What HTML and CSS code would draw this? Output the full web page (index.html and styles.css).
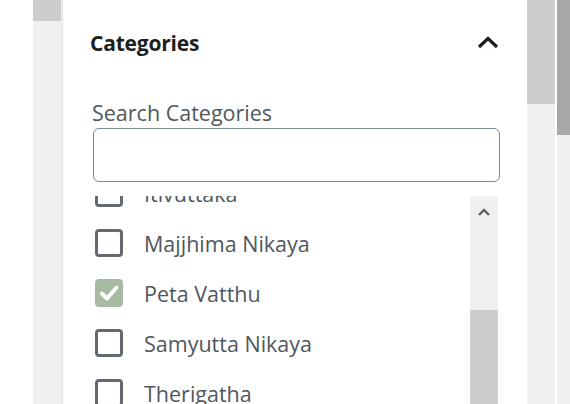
FILE: index.html
```html
<!DOCTYPE html>
<html lang="en">
<head>
<meta charset="utf-8">
<title>Categories</title>
<link rel="stylesheet" href="styles.css">
</head>
<body>
<div class="page">
  <div class="gutter"></div>
  <div class="side-scroll"><div class="side-thumb"></div></div>
  <section class="panel">
    <header class="panel-head">
      <h2 class="panel-title">Categories</h2>
      <svg class="chevron" width="22" height="14" viewBox="0 0 22 14" aria-hidden="true">
        <path d="M2 12 L11 3.5 L20 12" fill="none" stroke="#1e1e1e" stroke-width="3.2"/>
      </svg>
    </header>
    <label class="search-label" for="cat-search">Search Categories</label>
    <input class="search-input" id="cat-search" type="text">
    <div class="list-wrap">
      <div class="list-clip">
        <ul class="cat-list">
          <li class="cat-item"><span class="box"></span><span class="cat-name">Itivuttaka</span></li>
          <li class="cat-item"><span class="box"></span><span class="cat-name">Majjhima Nikaya</span></li>
          <li class="cat-item"><span class="box checked"><svg width="28" height="28" viewBox="0 0 28 28"><path d="M7 14.5 L12 19.5 L21.5 8.5" fill="none" stroke="#fff" stroke-width="4" stroke-linecap="round" stroke-linejoin="round"/></svg></span><span class="cat-name">Peta Vatthu</span></li>
          <li class="cat-item"><span class="box"></span><span class="cat-name">Samyutta Nikaya</span></li>
          <li class="cat-item"><span class="box"></span><span class="cat-name">Therigatha</span></li>
          <li class="cat-item"><span class="box"></span><span class="cat-name">Udana</span></li>
        </ul>
      </div>
      <div class="list-scroll">
        <div class="list-arrow">
          <svg width="12" height="8" viewBox="0 0 12 8"><path d="M1 7 L6 2 L11 7" fill="none" stroke="#606060" stroke-width="2.4"/></svg>
        </div>
        <div class="list-thumb"></div>
      </div>
    </div>
  </section>
  <div class="main-scroll"><div class="main-thumb"></div></div>
  <div class="gap"></div>
  <div class="win-scroll"><div class="win-thumb"></div></div>
</div>
</body>
</html>
```
FILE: styles.css
```css
html, body {
  margin: 0;
  padding: 0;
  background: #ffffff;
}
body {
  width: 570px;
  height: 404px;
  overflow: hidden;
  font-family: "Open Sans", "Noto Sans", sans-serif;
}
.page {
  display: flex;
  height: 404px;
  overflow: hidden;
}
.gutter {
  width: 33px;
  flex: none;
}
.side-scroll {
  width: 29px;
  flex: none;
  background: #f0f0f0;
  border-right: 1px solid #e2e2e2;
}
.side-thumb {
  width: 28px;
  height: 21px;
  background: #cdcdcd;
}
.panel {
  flex: none;
  width: 464px;
  box-sizing: border-box;
  padding: 0 29px 0 30px;
  background: #fff;
  display: flex;
  flex-direction: column;
  overflow: hidden;
}
.panel-head {
  display: flex;
  align-items: center;
  justify-content: space-between;
  height: 86px;
  margin-left: -3px;
  flex: none;
}
.panel-title {
  margin: 0;
  font-size: 21px;
  font-weight: 700;
  color: #1e1e1e;
  letter-spacing: -0.2px;
}
.chevron {
  margin-right: -1px;
  margin-top: -2px;
}
.search-label {
  font-size: 21.5px;
  color: #50575e;
  line-height: 28px;
  margin: 13px 0 0 -1px;
  letter-spacing: 0;
  flex: none;
}
.search-input {
  display: block;
  flex: none;
  box-sizing: border-box;
  width: 407px;
  height: 54px;
  margin: 1px 0 0 0;
  border: 1.5px solid #7e8890;
  border-radius: 6px;
  background: #fff;
}
.list-wrap {
  display: flex;
  flex: none;
  margin-top: 14px;
  height: 214px;
  width: 405px;
}
.list-clip {
  flex: 1;
  overflow: hidden;
}
.cat-list {
  list-style: none;
  margin: -28px 0 0 0;
  padding: 0 0 0 2px;
}
.cat-item {
  display: flex;
  align-items: center;
  height: 50px;
  gap: 21px;
}
.box {
  flex: none;
  box-sizing: border-box;
  width: 28px;
  height: 28px;
  border: 3px solid #646970;
  border-radius: 4px;
  background: #fff;
}
.box.checked {
  border: none;
  background: #a6bba1;
  display: flex;
}
.cat-name {
  font-size: 21.5px;
  color: #50575e;
  letter-spacing: 0;
}
.list-scroll {
  flex: none;
  width: 28px;
  background: #f0f0f0;
  display: flex;
  flex-direction: column;
}
.list-arrow {
  height: 114px;
  display: flex;
  justify-content: center;
  padding-top: 12px;
  box-sizing: border-box;
}
.list-thumb {
  flex: 1;
  background: #cdcdcd;
}
.main-scroll {
  width: 28px;
  flex: none;
  background: #f0f0f0;
}
.main-thumb {
  height: 104px;
  background: #cdcdcd;
}
.gap {
  width: 2px;
  flex: none;
  background: #fff;
}
.win-scroll {
  flex: 1;
  background: #f0f0f0;
}
.win-thumb {
  height: 135px;
  background: #a8a8a8;
}
```
